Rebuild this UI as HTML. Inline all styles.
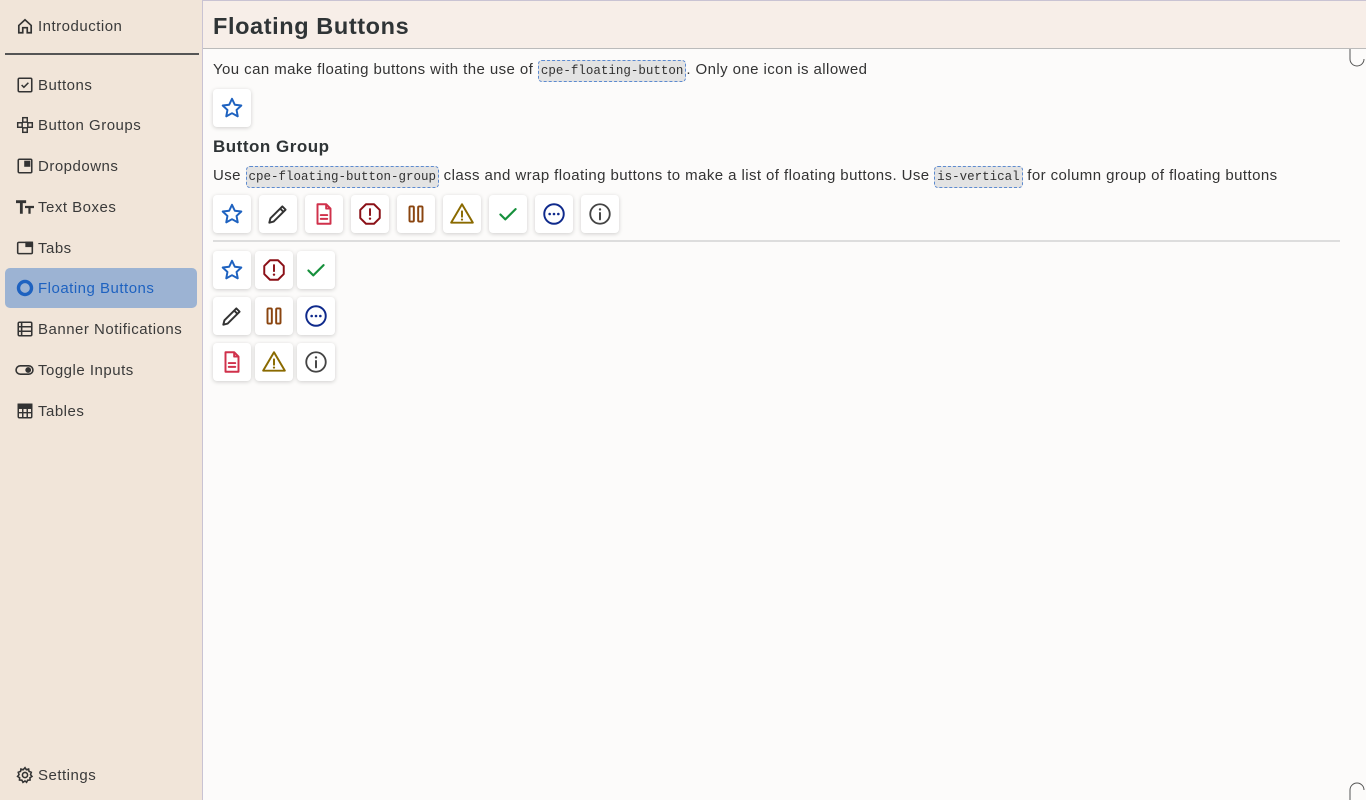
<!DOCTYPE html>
<html><head><meta charset="utf-8"><style>
*{box-sizing:border-box;margin:0;padding:0}
body{width:1366px;height:800px;overflow:hidden;font-family:"Liberation Sans",sans-serif;color:#333;background:#fcfbfa;position:relative}
.side{position:absolute;left:0;top:0;width:203px;height:800px;background:#f1e5d9;border-right:1px solid #c9c3d3}
.item{position:absolute;left:5px;width:192px;height:40px;display:flex;align-items:center;padding-left:11px;font-size:15px;color:#3a3a3a;letter-spacing:.5px}
.item svg{width:18px;height:18px;margin-right:4px;flex:none}
.item.act{background:#9cb3d3;border-radius:5px;color:#1e62c0}
.hr{position:absolute;left:5px;top:53px;width:194px;height:2px;background:#555}
.head{position:absolute;left:203px;top:0;width:1163px;height:49px;background:#f7eee8;border-bottom:1px solid #bbb;border-top:1px solid #c9c3d3}
.head h1{font-size:23.5px;font-weight:bold;color:#2f3436;position:absolute;left:10px;top:12px;letter-spacing:.6px}
p{position:absolute;left:213px;font-size:15px;color:#333;white-space:nowrap;letter-spacing:.42px}
code{font-family:"Liberation Mono",monospace;font-size:12.5px;background:#e3e3e3;border:1px dashed #5c8ad0;border-radius:4px;padding:3px 2px;letter-spacing:0}
h2{position:absolute;left:213px;top:137px;font-size:17px;font-weight:bold;color:#2f3436;letter-spacing:.5px}
.b{position:absolute;width:38px;height:38px;background:#fff;border-radius:4px;box-shadow:0 1px 4px rgba(0,0,0,.18);display:flex;align-items:center;justify-content:center}
.b svg{width:26px;height:26px;fill:none;stroke-width:1.8;stroke-linecap:round;stroke-linejoin:round}
.line{position:absolute;left:213px;top:240px;width:1127px;height:2px;background:#ddd}
</style></head><body>
<svg width="0" height="0" style="position:absolute">
<defs>
<symbol id="star" viewBox="0 0 24 24"><path d="M12 3.5l2.6 5.5 6 .7-4.4 4.1 1.1 5.9L12 16.8l-5.3 2.9 1.1-5.9-4.4-4.1 6-.7z" stroke="#1e62c0" stroke-width="1.8"/></symbol>
<symbol id="pen" viewBox="0 0 24 24"><path d="M4 20l1-4L16 5l3 3L8 19z M14 7l3 3" stroke="#333" stroke-width="1.8"/></symbol>
<symbol id="doc" viewBox="0 0 24 24"><path d="M6 3h8l4 4v14H6z M14 3v4h4 M9 13h6 M9 16.5h6" stroke="#d0314b" stroke-width="1.8"/></symbol>
<symbol id="stop" viewBox="0 0 24 24"><path d="M8.3 3h7.4L21 8.3v7.4L15.7 21H8.3L3 15.7V8.3z M12 7.5v5.5" stroke="#8b1017" stroke-width="1.8"/><circle cx="12" cy="16.3" r="1.1" fill="#8b1017"/></symbol>
<symbol id="pause" viewBox="0 0 24 24"><rect x="6" y="5" width="4" height="14" rx="1" stroke="#8a4510" stroke-width="1.8"/><rect x="14" y="5" width="4" height="14" rx="1" stroke="#8a4510" stroke-width="1.8"/></symbol>
<symbol id="warn" viewBox="0 0 24 24"><path d="M12 3L22 20H2z M12 9.5v5" stroke="#8a6a00" stroke-width="1.8"/><circle cx="12" cy="17.2" r="1" fill="#8a6a00"/></symbol>
<symbol id="chk" viewBox="0 0 24 24"><path d="M5 12.5l4.5 4.5L19 7.5" stroke="#16903c" stroke-width="2"/></symbol>
<symbol id="more" viewBox="0 0 24 24"><circle cx="12" cy="12" r="9" stroke="#0f2a8c" stroke-width="1.8"/><circle cx="8" cy="12" r="1.2" fill="#0f2a8c"/><circle cx="12" cy="12" r="1.2" fill="#0f2a8c"/><circle cx="16" cy="12" r="1.2" fill="#0f2a8c"/></symbol>
<symbol id="info" viewBox="0 0 24 24"><circle cx="12" cy="12" r="9" stroke="#444" stroke-width="1.7"/><path d="M12 11v6" stroke="#444" stroke-width="1.8"/><circle cx="12" cy="7.8" r="1.1" fill="#444"/></symbol>
</defs></svg>

<div class="side">
<div class="item" style="top:6px"><svg viewBox="0 0 16 16" fill="none" stroke="#333" stroke-width="1.5"><path d="M2.5 7.5L8 2.5l5.5 5V14H10V9.5H6V14H2.5z"/></svg>Introduction</div>
<div class="hr"></div>
<div class="item" style="top:65px"><svg viewBox="0 0 16 16" fill="none" stroke="#333" stroke-width="1.4"><rect x="2" y="2" width="12" height="12" rx="1"/><path d="M5 8l2 2 4-4"/></svg>Buttons</div>
<div class="item" style="top:105px"><svg viewBox="0 0 16 16" fill="none" stroke="#333" stroke-width="1.3"><rect x="6" y="1.5" width="4" height="4"/><rect x="1.5" y="6" width="4" height="4"/><rect x="10.5" y="6" width="4" height="4"/><rect x="6" y="10.5" width="4" height="4"/></svg>Button Groups</div>
<div class="item" style="top:146px"><svg viewBox="0 0 16 16" fill="none" stroke="#333" stroke-width="1.4"><rect x="2" y="2" width="12" height="12" rx="1"/><rect x="8" y="4" width="4" height="4" fill="#333"/></svg>Dropdowns</div>
<div class="item" style="top:187px"><svg viewBox="0 0 16 16" fill="#333"><path d="M0 2h9v2.5H6V14H3.5V4.5H0z M8 7h8v2h-3v5h-2V9H8z"/></svg>Text Boxes</div>
<div class="item" style="top:228px"><svg viewBox="0 0 16 16" fill="none" stroke="#333" stroke-width="1.4"><rect x="1.5" y="3" width="13" height="10" rx="1"/><rect x="9" y="3" width="5.5" height="3.5" fill="#333"/></svg>Tabs</div>
<div class="item act" style="top:268px"><svg viewBox="0 0 16 16" fill="none" stroke="#1e62c0" stroke-width="3"><circle cx="8" cy="8" r="5.8"/></svg>Floating Buttons</div>
<div class="item" style="top:309px"><svg viewBox="0 0 16 16" fill="none" stroke="#333" stroke-width="1.4"><rect x="2" y="2" width="12" height="12" rx="1"/><path d="M2 6h12M2 10h12M5 2v12"/></svg>Banner Notifications</div>
<div class="item" style="top:350px;padding-left:10px"><svg viewBox="0 0 18 16" fill="none" stroke="#333" stroke-width="1.5" style="width:19px"><rect x="1" y="4" width="16" height="8" rx="4"/><circle cx="12.5" cy="8" r="2" fill="#333"/></svg>Toggle Inputs</div>
<div class="item" style="top:391px"><svg viewBox="0 0 16 16" fill="none" stroke="#333" stroke-width="1.3"><rect x="2" y="2" width="12" height="12" rx="1"/><path d="M2 5.5h12M2 9.5h12M6 5.5v8.5M10 5.5v8.5"/><rect x="2" y="2" width="12" height="3.5" fill="#333"/></svg>Tables</div>
<div class="item" style="top:755px"><svg viewBox="0 0 16 16" fill="none" stroke="#333" stroke-width="1.4"><circle cx="8" cy="8" r="2.3"/><path d="M8 1.5l1.2 1.8 2-.6.4 2.1 2 .8-.7 2 1.3 1.7-1.8 1.1.1 2.1-2.1.1-1 1.9L8 13.3l-1.8 1.2-1-1.9-2.1-.1.1-2.1L1.4 9.3l1.3-1.7-.7-2 2-.8.4-2.1 2 .6z"/></svg>Settings</div>
</div>

<div class="head"><h1>Floating Buttons</h1></div>
<svg style="position:absolute;left:1349px;top:49px" width="17" height="751" fill="none" stroke="#555" stroke-width="1"><path d="M1 0v10a7 7 0 0 0 14 0"/><path d="M1 751v-10a7 7 0 0 1 14 0"/></svg>

<p style="top:61px">You can make floating buttons with the use of <code>cpe-floating-button</code>. Only one icon is allowed</p>
<div class="b" style="left:213px;top:89px"><svg><use href="#star"/></svg></div>
<h2>Button Group</h2>
<p style="top:167px">Use <code>cpe-floating-button-group</code> class and wrap floating buttons to make a list of floating buttons. Use <code>is-vertical</code> for column group of floating buttons</p>

<div class="b" style="left:213px;top:195px"><svg><use href="#star"/></svg></div>
<div class="b" style="left:259px;top:195px"><svg><use href="#pen"/></svg></div>
<div class="b" style="left:305px;top:195px"><svg><use href="#doc"/></svg></div>
<div class="b" style="left:351px;top:195px"><svg><use href="#stop"/></svg></div>
<div class="b" style="left:397px;top:195px"><svg><use href="#pause"/></svg></div>
<div class="b" style="left:443px;top:195px"><svg><use href="#warn"/></svg></div>
<div class="b" style="left:489px;top:195px"><svg><use href="#chk"/></svg></div>
<div class="b" style="left:535px;top:195px"><svg><use href="#more"/></svg></div>
<div class="b" style="left:581px;top:195px"><svg><use href="#info"/></svg></div>
<div class="line"></div>

<div class="b" style="left:213px;top:251px"><svg><use href="#star"/></svg></div>
<div class="b" style="left:255px;top:251px"><svg><use href="#stop"/></svg></div>
<div class="b" style="left:297px;top:251px"><svg><use href="#chk"/></svg></div>
<div class="b" style="left:213px;top:297px"><svg><use href="#pen"/></svg></div>
<div class="b" style="left:255px;top:297px"><svg><use href="#pause"/></svg></div>
<div class="b" style="left:297px;top:297px"><svg><use href="#more"/></svg></div>
<div class="b" style="left:213px;top:343px"><svg><use href="#doc"/></svg></div>
<div class="b" style="left:255px;top:343px"><svg><use href="#warn"/></svg></div>
<div class="b" style="left:297px;top:343px"><svg><use href="#info"/></svg></div>
</body></html>
